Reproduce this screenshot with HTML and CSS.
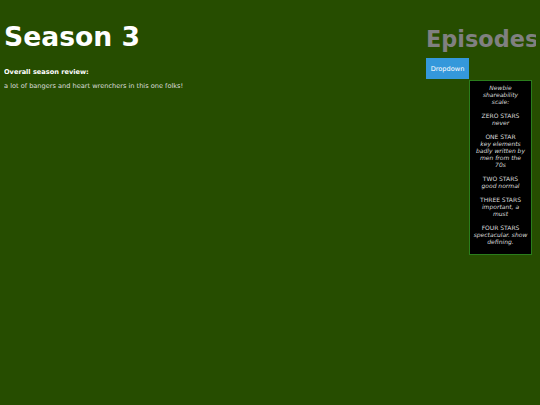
FILE: index.html
```html
<!DOCTYPE html>
<html lang="en">
<head>
  <meta charset="UTF-8" />
  <meta name="viewport" content="width=device-width, initial-scale=1" />
  <title>Season 3</title>
  <link rel="stylesheet" href="styles.css">
</head>
<body>
  <div class="page">
    <!-- ── Season review ─────────────────────────────── -->
    <main class="main">
      <h1>Season 3</h1>
      <p class="label">Overall season review:</p>
      <p>a lot of bangers and heart wrenchers in this one folks!</p>
    </main>

    <!-- ── Episodes sidebar ──────────────────────────── -->
    <aside class="sidebar">
      <h2>Episodes</h2>
      <div class="dropdown">
        <button class="dropbtn">Dropdown</button>
        <div class="dropdown-content">
          <p><em>Newbie<br>shareability<br>scale:</em></p>
          <p>ZERO STARS<br><em>never</em></p>
          <p>ONE STAR<br><em>key elements<br>badly written by<br>men from the<br>70s</em></p>
          <p>TWO STARS<br><em>good normal</em></p>
          <p>THREE STARS<br><em>important, a<br>must</em></p>
          <p>FOUR STARS<br><em>spectacular. show<br>defining.</em></p>
        </div>
      </div>
    </aside>
  </div>
</body>
</html>
```

FILE: styles.css
```css
body {
  margin: 4px;
  background: #264d00;
  color: #dddddd;
  font-family: "DejaVu Sans", Verdana, sans-serif;
  font-size: 6.6px;
}
.page {
  display: flex;
}
.main {
  flex: 1;
}
h1 {
  margin: 16.5px 0 16px;
  font-size: 26.6px;
  color: #fff;
}
p {
  margin: 6.6px 0;
}
.label {
  font-weight: bold;
  color: #fff;
}
.sidebar {
  width: 110px;
}
h2 {
  margin: 22px 0 6px;
  font-size: 22.4px;
  color: #808080;
  white-space: nowrap;
}
/* menu hangs off the button's lower right corner */
.dropdown {
  display: flex;
  flex-direction: column;
  align-items: flex-start;
}
.dropbtn {
  display: block;
  width: 43px;
  height: 21px;
  padding: 0;
  border: none;
  background: #3498db;
  color: #fff;
  font-family: inherit;
  font-size: 6.6px;
}
.dropdown-content {
  margin: 1px 0 0 43px;
  width: 57px;
  padding: 3px 2px 2px;
  border: 1px solid #2a7d1c;
  background: #000;
  text-align: center;
  font-size: 6px;
  line-height: 7px;
}
.dropdown-content p {
  margin: 0 0 7px;
}
```
